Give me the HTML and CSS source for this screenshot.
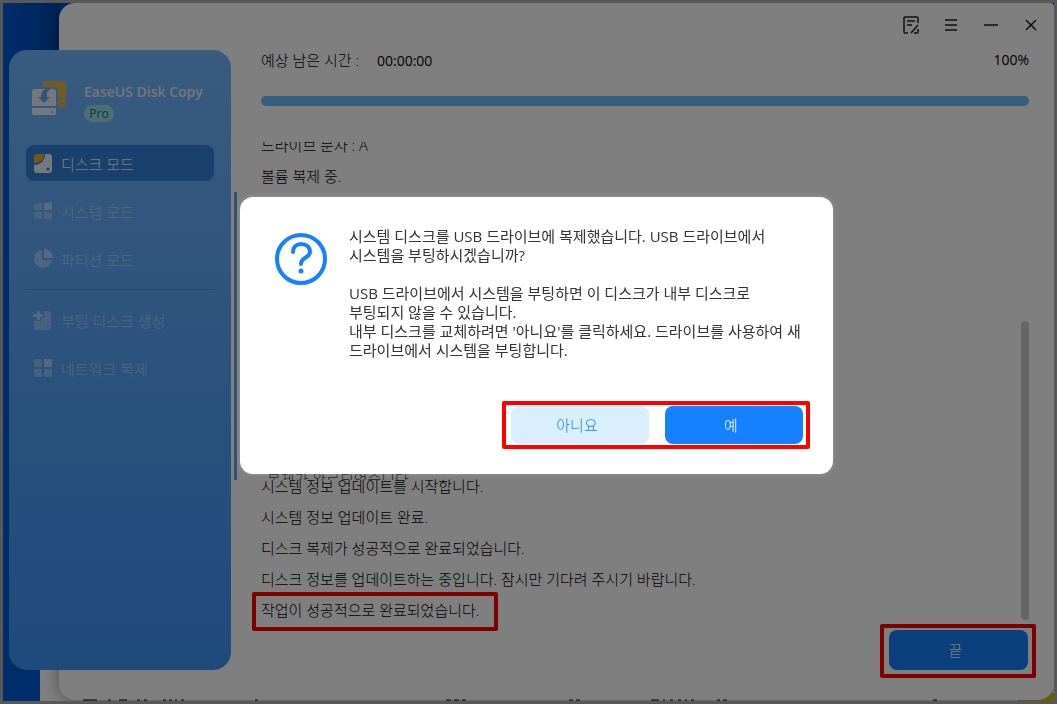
FILE: index.html
```html
<!DOCTYPE html>
<html lang="ko">
<head>
  <meta charset="UTF-8">
  <meta name="viewport" content="width=device-width, initial-scale=1.0">
  <title>EaseUS Disk Copy</title>
  <link rel="stylesheet" href="styles.css">
</head>
<body>
  <div class="desktop">
    <div class="window">
      <aside class="sidebar">
        <div class="brand">
          <svg class="logo" viewBox="0 0 36 36" aria-hidden="true">
            <path fill="#fdb528" d="M13 0h19a2 2 0 0 1 2 2v15h-8V9a3 3 0 0 0-3-3H11V2a2 2 0 0 1 2-2z"/>
            <path fill="#fdb528" d="M26 18h8v6a2 2 0 0 1-2 2h-6z"/>
            <circle cx="30" cy="22" r="1" fill="#68a8ec"/>
            <path fill="#fff" d="M3 8h18a3 3 0 0 1 3 3v14H0V11a3 3 0 0 1 3-3z"/>
            <path fill="#68a8ec" d="M9 15c0-4 2-6 6-8h4c-3 3-4 4-4 7v2h3l-6 6-6-6h3z"/>
            <path fill="#fff" d="M0 27h24v5a2 2 0 0 1-2 2H2a2 2 0 0 1-2-2z"/>
            <circle cx="20" cy="31" r="1" fill="#68a8ec"/>
          </svg>
          <div>
            <div class="brand-name">EaseUS Disk Copy</div>
            <span class="badge">Pro</span>
          </div>
        </div>

        <nav class="nav">
          <a class="nav-item active" href="#">
            <svg viewBox="0 0 20 20" aria-hidden="true">
              <path fill="#fff" d="M12 1h4a3 3 0 0 1 3 3v13a3 3 0 0 1-3 3H4a3 3 0 0 1-3-3v-5C8 12 12 7 12 1z"/>
              <path fill="#fdb528" d="M4 1h7c0 6-4 9-10 9V4a3 3 0 0 1 3-3z"/>
              <circle cx="15" cy="16" r="1.500" fill="#2f76c6"/>
            </svg>
            디스크 모드
          </a>
          <a class="nav-item" href="#">
            <svg viewBox="0 0 20 20" aria-hidden="true">
              <path fill="#fff" opacity=".6" d="M1 3l8-1v7H1zM1 11h8v7l-8-1zM11 11h8v8l-8-1z"/>
              <path fill="#fff" d="M11 2l8-1v8h-8z"/>
            </svg>
            시스템 모드
          </a>
          <a class="nav-item" href="#">
            <svg viewBox="0 0 20 20" aria-hidden="true">
              <path fill="#fff" opacity=".8" d="M9 1a9 9 0 1 0 10 10H9z"/>
              <path fill="#fff" d="M11 0a9 9 0 0 1 9 9h-9z"/>
            </svg>
            파티션 모드
          </a>
          <hr>
          <a class="nav-item" href="#">
            <svg viewBox="0 0 20 20" aria-hidden="true">
              <path fill="#fff" opacity=".65" d="M11 1h5a2 2 0 0 1 2 2v15a2 2 0 0 1-2 2H3a2 2 0 0 1-2-2v-7h7V8h3z"/>
              <path fill="#fff" d="M4 1h3v3h3v3H7v3H4V7H0V4h4z"/>
              <circle cx="15" cy="16" r="1" fill="#5a98e0"/>
            </svg>
            부팅 디스크 생성
          </a>
          <a class="nav-item" href="#">
            <svg viewBox="0 0 20 20" aria-hidden="true">
              <g fill="#fff" opacity=".65">
                <rect x="1" y="1" width="8" height="8" rx="1"/>
                <rect x="1" y="11" width="8" height="8" rx="1"/>
                <rect x="11" y="11" width="8" height="8" rx="1"/>
              </g>
              <rect x="11" y="1" width="8" height="8" rx="1" fill="#fff"/>
            </svg>
            네트워크 복제
          </a>
        </nav>
      </aside>

      <main class="content">
        <div class="titlebar">
          <button type="button" aria-label="로그">
            <svg viewBox="0 0 20 20" aria-hidden="true">
              <path d="M17 8V3a1 1 0 0 0-1-1H4a1 1 0 0 0-1 1v14a1 1 0 0 0 1 1h3M6 6h8M6 10h5M17 10l-7 8M13 18h3a1 1 0 0 0 1-1v-3"/>
            </svg>
          </button>
          <button type="button" aria-label="메뉴">
            <svg viewBox="0 0 20 20" aria-hidden="true"><path d="M4 5h12M4 10h12M4 15h12"/></svg>
          </button>
          <button type="button" aria-label="최소화">
            <svg viewBox="0 0 20 20" aria-hidden="true"><path d="M3 10h14"/></svg>
          </button>
          <button type="button" aria-label="닫기">
            <svg viewBox="0 0 20 20" aria-hidden="true"><path d="M5 5l10 10M15 5L5 15"/></svg>
          </button>
        </div>

        <div class="status">
          <span>예상 남은 시간 : <span class="time">00:00:00</span></span>
          <span class="percent">100%</span>
        </div>
        <div class="progress"><div class="progress-bar"></div></div>

        <div class="log">
          <p>드라이브 문자 : A</p>
          <p>볼륨 복제 중.</p>
          <div class="log-gap"></div>
          <p>시스템 정보 업데이트를 시작합니다.</p>
          <p>시스템 정보 업데이트 완료.</p>
          <p>디스크 복제가 성공적으로 완료되었습니다.</p>
          <p>디스크 정보를 업데이트하는 중입니다. 잠시만 기다려 주시기 바랍니다.</p>
          <p><span class="marked">작업이 성공적으로 완료되었습니다.</span></p>
          <div class="log-behind">복제가 완료되었습니다.</div>
          <div class="scroll-thumb"></div>
        </div>
        <div class="seam"></div>

        <div class="footer">
          <div class="mark">
            <button type="button" class="btn btn-primary">끝</button>
          </div>
        </div>
      </main>
    </div>
    <!-- top edge of the list in the window underneath -->
    <svg class="peek" height="2" aria-hidden="true">
      <path d="M80 1h14M105 1h3M116 1h8M134 1h3M141 1h3M160 1h3M166 1h3M172 1h2M178 1h3M252 1h3M443 1h5M451 1h5M459 1h4M566 1h4M573 1h4M648 1h8M660 1h2M667 1h3M675 1h3M682 1h2M688 1h3M714 1h3M720 1h4M930 1h4"/>
    </svg>
  </div>

  <div class="overlay">
    <div class="dialog" role="dialog" aria-modal="true" aria-labelledby="question">
      <div class="dialog-body">
        <svg class="question-icon" viewBox="0 0 52 52" aria-hidden="true">
          <circle cx="26" cy="26" r="24"/>
          <path d="M18 19c0-5 3-8 8-8s9 3 9 8c0 6-9 5-9 12"/>
          <circle class="dot" cx="26" cy="38" r="2.500"/>
        </svg>
        <div class="dialog-text">
          <p id="question">시스템 디스크를 USB 드라이브에 복제했습니다. USB 드라이브에서<br>시스템을 부팅하시겠습니까?</p>
          <p>USB 드라이브에서 시스템을 부팅하면 이 디스크가 내부 디스크로<br>부팅되지 않을 수 있습니다.<br>내부 디스크를 교체하려면 '아니요'를 클릭하세요. 드라이브를 사용하여 새<br>드라이브에서 시스템을 부팅합니다.</p>
        </div>
      </div>
      <div class="dialog-actions">
        <div class="mark">
          <button type="button" class="btn btn-light">아니요</button>
          <button type="button" class="btn btn-primary">예</button>
        </div>
      </div>
    </div>
  </div>
</body>
</html>
```
FILE: styles.css
```css
* {
  box-sizing: border-box;
}

body {
  margin: 0;
  font-family: "Open Sans", "Noto Sans CJK KR", sans-serif;
  font-size: 15px;
  color: #000;
}

p {
  margin: 0;
}

button {
  font: inherit;
  cursor: pointer;
}

.desktop {
  position: relative;
  display: flex;
  min-height: 100vh;
  padding-left: 56px;
  border: 3px solid #b0b0b0;
  background: linear-gradient(#e8d800, #e8d800) right bottom / 36px 8px no-repeat,
    linear-gradient(to right, #005ad8 37px, #fff 37px) left bottom / 100% 31px no-repeat,
    linear-gradient(to right, #005ad8, #0048b0 56px, #005ad8 57px);
  overflow: hidden;
}

.window {
  flex: 1;
  display: flex;
  min-width: 0;
  margin-bottom: 1px;
  background: #fff;
  border-radius: 16px 4px 16px 16px;
  box-shadow: 0 0 16px rgba(0, 0, 0, 0.4);
}

.peek {
  position: absolute;
  left: 0;
  bottom: 0;
  width: 100%;
  fill: none;
  stroke: #000;
  stroke-width: 1;
}

/* sidebar */
.sidebar {
  flex: none;
  width: 222px;
  margin: 47px 0 30px -50px;
  padding: 31px 17px;
  background: linear-gradient(#74b6ff, #3c94f8);
  border-radius: 18px;
}

.brand {
  display: flex;
  gap: 16px;
  padding-left: 6px;
  height: 64px;
}

.logo {
  width: 36px;
  height: 36px;
  opacity: 0.85;
}

.brand-name {
  height: 20px;
  font-size: 14px;
  line-height: 22px;
  font-weight: 600;
  color: #e8eef4;
  white-space: nowrap;
}

.badge {
  display: block;
  width: 30px;
  margin-top: 4px;
  border-radius: 9px;
  background: #9adfe8;
  color: #00749a;
  font-size: 12px;
  line-height: 17px;
  text-align: center;
}

.nav {
  display: flex;
  flex-direction: column;
  gap: 12px;
  font-weight: 300;
}

.nav-item {
  display: flex;
  align-items: center;
  gap: 8px;
  height: 36px;
  padding-left: 7px;
  border-radius: 8px;
  color: rgba(255, 255, 255, 0.5);
  text-decoration: none;
}

.nav-item svg {
  width: 20px;
  height: 20px;
  opacity: 0.5;
}

.nav-item.active {
  background: #3480dc;
  color: #fff;
}

.nav-item.active svg {
  opacity: 0.9;
}

.nav hr {
  width: 100%;
  height: 1px;
  margin: 0;
  border: 0;
  background: #4690e4;
}

/* content */
.content {
  position: relative;
  flex: 1;
  display: flex;
  flex-direction: column;
  min-width: 0;
  padding: 12px 25px 22px 30px;
}

.titlebar {
  display: flex;
  justify-content: flex-end;
  gap: 20px;
  margin-right: -12px;
}

.titlebar button {
  width: 20px;
  height: 20px;
  padding: 0;
  border: 0;
  background: none;
}

.titlebar svg {
  display: block;
  fill: none;
  stroke: #222;
  stroke-width: 1.5;
}

.status {
  display: flex;
  justify-content: space-between;
  margin-top: 11px;
  font-weight: 300;
  line-height: 28px;
}

.time {
  margin-left: 14px;
}

.time,
.percent {
  font-size: 14px;
  font-weight: 400;
}

.progress {
  height: 10px;
  margin: 21px 0 36px;
  border-radius: 5px;
  background: #e0e8f0;
}

.progress-bar {
  height: 100%;
  border-radius: 5px;
  background: #6cbeff;
}

.log {
  position: relative;
  flex: 1 1 0;
  display: flex;
  flex-direction: column;
  justify-content: flex-end;
  overflow: hidden;
  margin-left: -9px;
  padding-left: 9px;
  padding-bottom: 5px;
  font-weight: 300;
}

.log p {
  flex: none;
  line-height: 31px;
}

.log-gap {
  flex: none;
  height: 279px;
}

/* leftover of the previous list, half covered by the new rows */
.log-behind {
  position: absolute;
  left: 15px;
  bottom: 151px;
  height: 16px;
  overflow: hidden;
  line-height: 31px;
  color: #444;
}

.marked {
  position: relative;
}

/* red frame round the last log line */
.marked::before {
  content: "";
  position: absolute;
  inset: -8px -19px -11px -9px;
  border: 4px solid #f00;
  border-radius: 2px;
}

.scroll-thumb {
  position: absolute;
  right: 0;
  bottom: 11px;
  width: 8px;
  height: 299px;
  border-radius: 4px;
  background: #ccc;
}

.seam {
  position: absolute;
  left: 3px;
  top: 189px;
  width: 3px;
  height: 288px;
  background: #5fa3ee;
}

.footer {
  display: flex;
  justify-content: flex-end;
  margin: -7px -7px 0 0;
}

.mark {
  display: flex;
  gap: 16px;
  padding: 1px 3px 1px 5px;
  border: 4px solid #f00;
  border-radius: 2px;
}

.btn {
  width: 138px;
  height: 38px;
  padding: 0 6px 2px 0;
  border: 0;
  border-radius: 8px;
  font-weight: 300;
}

.footer .mark {
  padding: 2px 4px 4px 5px;
}

.footer .btn {
  width: 139px;
  height: 40px;
}

.btn-primary {
  background: #1681ff;
  color: #fff;
}

.btn-light {
  background: #d9eeff;
  color: #1681e0;
}

/* dialog */
.overlay {
  position: fixed;
  inset: 0;
  display: flex;
  align-items: center;
  justify-content: center;
  padding: 0 0 33px 16px;
  background: rgba(0, 0, 0, 0.5);
}

.dialog {
  width: 593px;
  padding: 30px 23px 25px 35px;
  border-radius: 13px;
  background: #fff;
  box-shadow: 0 0 4px rgba(255, 255, 255, 0.2);
}

.dialog-body {
  display: flex;
  gap: 22px;
}

.question-icon {
  flex: none;
  width: 52px;
  height: 52px;
  margin-top: 6px;
  fill: none;
  stroke: #1681ff;
  stroke-width: 4;
  stroke-linecap: round;
}

.question-icon .dot {
  fill: #1681ff;
  stroke: none;
}

.dialog-text {
  line-height: 19px;
  white-space: nowrap;
  color: #333;
}

.dialog-text p + p {
  margin-top: 19px;
}

.dialog-actions {
  display: flex;
  justify-content: flex-end;
  margin-top: 41px;
}
```
